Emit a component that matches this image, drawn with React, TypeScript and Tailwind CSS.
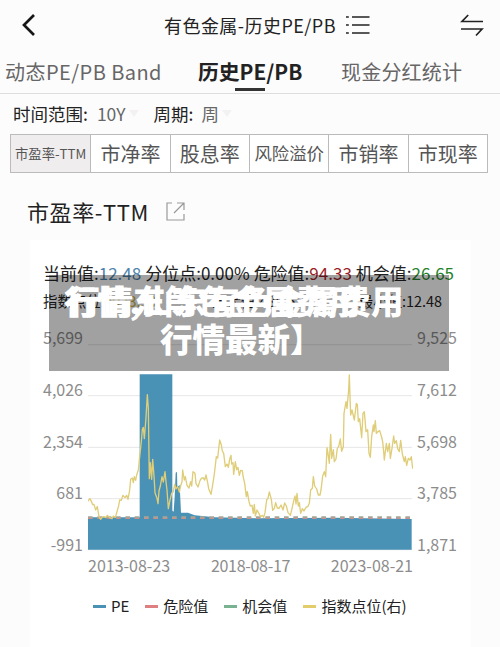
import React from 'react';

const metrics = [
  { label: '市盈率-TTM', className: 'bg-[#f0edef] text-[13.3px] text-[#333]' },
  { label: '市净率', className: 'text-[20px]' },
  { label: '股息率', className: 'text-[20px]' },
  { label: '风险溢价', className: 'text-[17.4px]' },
  { label: '市销率', className: 'text-[20px]' },
  { label: '市现率', className: 'text-[20px]' },
];

const leftAxis = ['5,699', '4,026', '2,354', '681', '-991'];
const rightAxis = ['9,525', '7,612', '5,698', '3,785', '1,871'];
const gridLines = [14, 167, 322, 476, 629];

const legend = [
  { label: 'PE', color: 'bg-[#4991b5]', gap: 'mr-4' },
  { label: '危险值', color: 'bg-[#de7f82]', gap: 'mr-4' },
  { label: '机会值', color: 'bg-[#78b291]', gap: 'mr-4' },
  { label: '指数点位(右)', color: 'bg-[#e3cc6b]', gap: '' },
];

const indexPoints =
  '0,483 6,476 10,484 14,494 18,493 23,510 28,500 33,530 38,538 43,531 48,530 53,533 58,526 64,532 72,536 76,528 82,532 87,515 92,497 95,480 100,481 105,466 111,473 116,466 120,478 125,450 128,418 133,414 136,428 139,410 143,421 146,405 151,390 155,350 160,305 163,268 166,262 169,296 174,233 178,164 181,205 184,416 187,368 191,418 194,358 198,408 201,458 207,475 210,491 213,453 217,438 222,410 226,426 231,395 234,425 237,450 241,506 246,480 251,460 256,455 260,433 264,447 269,439 274,456 278,437 282,425 284,390 289,420 292,410 297,436 303,444 308,425 311,438 315,395 321,400 324,430 330,441 336,422 340,415 345,413 350,420 354,405 359,428 362,446 369,463 374,435 379,402 385,350 389,354 395,300 400,315 403,333 407,340 412,380 417,372 421,382 425,358 429,346 431,372 435,368 437,403 442,365 446,389 450,382 454,406 458,391 463,392 465,408 470,430 475,470 478,455 483,485 487,498 492,496 496,520 499,493 502,528 507,510 513,521 518,530 523,526 527,532 531,518 536,480 540,475 544,456 550,478 554,511 559,505 563,488 568,504 573,505 579,495 585,510 590,489 595,498 600,518 607,526 611,510 618,479 621,468 624,492 627,460 631,498 634,488 638,520 643,506 648,513 654,502 660,499 664,490 668,450 673,445 676,410 680,438 686,447 691,465 696,465 699,450 704,408 709,395 713,410 717,323 720,340 724,370 728,283 731,355 736,329 739,365 744,357 748,325 752,320 757,297 761,334 766,320 768,220 774,185 777,205 782,150 784,105 786,170 788,225 792,210 799,240 805,190 808,194 811,245 815,236 821,293 825,220 829,215 834,275 839,269 843,340 847,352 851,290 856,255 858,275 862,242 865,280 870,275 875,272 880,288 884,305 887,335 889,360 895,310 899,335 904,310 907,355 912,325 917,288 920,310 925,302 929,326 934,335 938,301 943,342 949,365 952,350 956,376 961,355 966,360 970,350 974,386';

const BackIcon = () => (
  <svg className="h-6 w-4" viewBox="0 0 16 24" fill="none" stroke="#171717" strokeWidth="2.7">
    <path d="M13 2 L3 12 L13 22" />
  </svg>
);

const ListIcon = () => (
  <svg className="ml-2.5 h-5 w-6" viewBox="0 0 24 20" fill="none" stroke="#222" strokeWidth="1.7">
    <path d="M6 2H23.5M6 10H23.5M6 18H23.5" />
    <path d="M0 2H2.8M0 10H2.8M0 18H2.8" />
  </svg>
);

const SwapIcon = () => (
  <svg className="h-6 w-6" viewBox="0 0 24 24" fill="none" stroke="#222" strokeWidth="1.7">
    <path d="M23 8.5H2L8.2 2M1 16H22L16 22.5" />
  </svg>
);

const ShareIcon = () => (
  <svg className="ml-[17px] h-[19px] w-[19px]" viewBox="0 0 19 19" fill="none" stroke="#999" strokeWidth="1.2">
    <path d="M6 1H1V18H18V12" />
    <path d="M8 11L17.5 1.5M11 1H18V8" />
  </svg>
);

const Caret = () => (
  <svg className="ml-[3px] h-2 w-2.5" viewBox="0 0 10 8" fill="#f4f1f3">
    <path d="M0 0H10L5 7Z" />
  </svg>
);

const Axis = ({ values, className }: { values: string[]; className: string }) => (
  <div className={`-mt-px flex h-[231px] flex-col justify-between text-[16px] leading-6 text-[#8c8c8c] ${className}`}>
    {values.map((value) => (
      <span key={value}>{value}</span>
    ))}
  </div>
);

const Chart = () => (
  <svg className="h-[213px] w-[325px] shrink-0" viewBox="0 0 975 639" fill="none">
    {gridLines.map((y) => (
      <path key={y} d={`M0 ${y}H972`} stroke="#e6e6e6" strokeWidth="3" />
    ))}
    <path
      d="M0 532H155V103H253V512L257 515L260 470L263 398L267 396L268 440L275 435L279 518L300 518L320 526L380 532L520 535L740 533L971 537V629H0Z"
      fill="#4991b5"
    />
    <path d="M0 532H972" stroke="#a5a797" strokeWidth="6" strokeDasharray="14 14" />
    <path d="M0 535H972" stroke="#c5908d" strokeWidth="4" strokeDasharray="14 14" />
    <polyline points={indexPoints} stroke="#dfcd78" strokeWidth="4" strokeLinejoin="round" />
  </svg>
);

export default function App() {
  return (
    <div className="h-[647px] w-[500px] overflow-hidden bg-[#fdfcfd] font-['Noto_Sans_CJK_SC',sans-serif] whitespace-nowrap text-[#222]">
      <header className="flex h-[50px] items-center">
        <div className="ml-[21px] w-[143px]">
          <BackIcon />
        </div>
        <h1 className="w-[172px] text-[18px] tracking-[0.45px]">有色金属-历史PE/PB</h1>
        <ListIcon />
        <div className="ml-auto pr-4">
          <SwapIcon />
        </div>
      </header>

      <nav className="flex h-11 items-center border-b border-[#dedede] text-[20px] text-[#666]">
        <span className="ml-[5px] w-[193px] tracking-[0.45px]">动态PE/PB Band</span>
        <span className="relative w-[143px] text-[20.8px] font-bold text-[#222]">
          历史PE/PB
          <span className="absolute -bottom-1 left-[37px] h-[3px] w-[30px] bg-[#333]" />
        </span>
        <span className="tracking-[0.2px]">现金分红统计</span>
      </nav>

      <div className="flex h-10 items-center pl-[13px] text-[17.5px]">
        <span>时间范围:</span>
        <span className="ml-[9px] text-[#666]">10Y</span>
        <Caret />
        <span className="ml-[15px]">周期:</span>
        <span className="ml-2 text-[#666]">周</span>
        <Caret />
      </div>

      <div className="ml-[10px] grid h-[39px] w-[478px] grid-cols-6 border border-[#bbb] bg-white">
        {metrics.map((metric, i) => (
          <div
            key={metric.label}
            className={`flex items-center justify-center text-[#555] ${i > 0 ? 'border-l border-[#bbb]' : ''} ${metric.className}`}
          >
            {metric.label}
          </div>
        ))}
      </div>

      <div className="flex h-[67px] items-center pt-[10px] pl-[27px]">
        <h2 className="text-[22px] tracking-[0.6px]">市盈率-TTM</h2>
        <ShareIcon />
      </div>

      <section className="relative ml-[30px] h-[407px] w-[441px] bg-white pt-[21px]">
        <div className="flex h-6 items-center pl-[13px] text-[17px]">
          当前值:<span className="text-[#4e83ac]">12.48</span>
          <span className="ml-1">分位点:0.00%</span>
          <span className="ml-1">危险值:</span>
          <span className="text-[#9b1d25]">94.33</span>
          <span className="ml-1">机会值:</span>
          <span className="text-[#23832c]">26.65</span>
        </div>
        <div className="mt-1 flex h-6 w-[412px] items-center justify-between pl-[13px] text-[14.4px]">
          <span>指数点位:<span className="text-[#c4ae3e]">4933.39</span></span>
          <span>最大值:485.62</span>
          <span>最小值:12.48</span>
        </div>

        <div className="mt-[13px] flex">
          <Axis values={leftAxis} className="w-[53px] items-end" />
          <div className="mt-[14px] ml-[5px]">
            <Chart />
            <div className="flex w-[325px] justify-between text-[16px] leading-6 text-[#8c8c8c]">
              <span>2013-08-23</span>
              <span className="tracking-[-0.3px]">2018-08-17</span>
              <span>2023-08-21</span>
            </div>
          </div>
          <Axis values={rightAxis} className="ml-1 items-start" />
        </div>

        <div className="mt-[17px] ml-[63px] flex h-6 items-center text-[15px]">
          {legend.map((item) => (
            <div key={item.label} className={`flex items-center ${item.gap}`}>
              <span className={`mr-[5px] h-[3px] w-[13px] ${item.color}`} />
              {item.label}
            </div>
          ))}
        </div>

        {/* caption banner, its first two lines share one row */}
        <div className="absolute top-[35px] left-[19px] h-24 w-[400px] bg-black/37 text-[32.5px] leading-[38px] font-black text-white">
          <span className="absolute top-1.5 left-[15px] tracking-[0.3px]">行情,山东有色金属费用</span>
          <span className="absolute top-1.5 left-[19px]">行情东等色金属费用</span>
          <span className="absolute top-11 left-[111px]">行情最新】</span>
        </div>
      </section>
    </div>
  );
}
